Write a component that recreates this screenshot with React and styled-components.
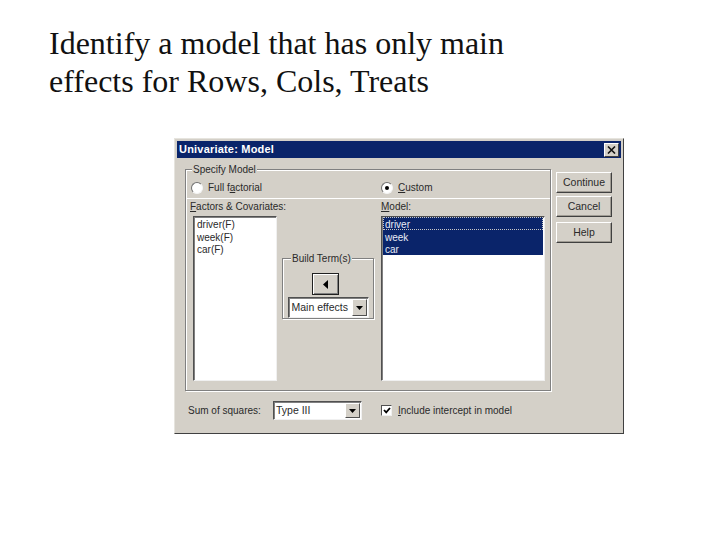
import React from "react";
import styled, { createGlobalStyle } from "styled-components";

const GlobalStyle = createGlobalStyle`
  html, body {
    margin: 0;
    background: #fff;
  }
  * {
    box-sizing: border-box;
  }
`;

const Slide = styled.div`
  width: 720px;
  height: 540px;
  padding: 24px 0 0 49px;
  overflow: hidden;
`;

const Heading = styled.h1`
  margin: 0;
  height: 114px;
  font: 400 32px/38px "Liberation Serif", serif;
  color: #111;
`;

const Dialog = styled.div`
  width: 450px;
  height: 296px;
  margin-left: 125px;
  padding: 2px 2px 0 2px;
  background: #d4d0c8;
  border: 1px solid;
  border-color: #e6e4de #404040 #404040 #e6e4de;
  font: 400 10px/13px "Liberation Sans", sans-serif;
  color: #2a2a2a;
`;

const TitleBar = styled.div`
  height: 17px;
  padding: 0 2px 0 2px;
  display: flex;
  align-items: center;
  justify-content: space-between;
  background: #0a246a;
  color: #fff;
  font-weight: 700;
  font-size: 11px;
  letter-spacing: 0.2px;
`;

const CloseButton = styled.div`
  width: 15px;
  height: 14px;
  display: flex;
  align-items: center;
  justify-content: center;
  background: #d4d0c8;
  border: 1px solid;
  border-color: #fff #404040 #404040 #fff;
`;

const Body = styled.div`
  display: flex;
  gap: 5px;
  padding: 11px 0 0 8px;
`;

const MainColumn = styled.div`
  width: 366px;
`;

const Group = styled.div`
  position: relative;
  border: 1px solid #808080;
  box-shadow: 1px 1px 0 #fff, inset 1px 1px 0 #fff;
`;

const ModelGroup = styled(Group)`
  height: 222px;
  display: flex;
  flex-direction: column;
`;

const Legend = styled.span`
  position: absolute;
  top: -7px;
  left: ${(p) => p.$left}px;
  padding: 0 1px;
  background: #d4d0c8;
  white-space: nowrap;
`;

const RadioRow = styled.div`
  height: 28px;
  padding: 7px 0 0 5px;
  display: flex;
  align-items: center;
`;

const Choice = styled.label`
  display: flex;
  align-items: center;
  gap: 5px;
  width: ${(p) => p.$width}px;
`;

const Radio = styled.span`
  width: 12px;
  height: 12px;
  display: flex;
  align-items: center;
  justify-content: center;
  border-radius: 50%;
  background: #fff;
  border: 1px solid;
  border-color: #707070 #f4f4f4 #f4f4f4 #707070;
  &::after {
    content: "";
    width: 4px;
    height: 4px;
    border-radius: 50%;
    background: ${(p) => (p.$checked ? "#000" : "transparent")};
  }
`;

const Panel = styled.div`
  flex: 1;
  display: flex;
  padding-left: 3px;
  border-top: 1px solid #fff;
  margin-left: 1px;
`;

const ListColumn = styled.div`
  width: ${(p) => p.$width}px;
  margin-right: ${(p) => p.$after}px;
  padding-top: 1px;
`;

const ListLabel = styled.div`
  height: 16px;
  white-space: nowrap;
`;

const ListBox = styled.div`
  height: 165px;
  margin-left: ${(p) => p.$inset}px;
  padding: 0 1px;
  background: #fff;
  border: 1px solid;
  border-color: #505050 #f0f0f0 #f0f0f0 #505050;
  box-shadow: inset 1px 1px 0 #808080;
`;

const ListItem = styled.div`
  height: 12.67px;
  line-height: 15px;
  padding-left: 2px;
  white-space: nowrap;
  background: ${(p) => (p.$selected ? "#0a246a" : "transparent")};
  color: ${(p) => (p.$selected ? "#e8ecf6" : "#2a2a2a")};
  outline: ${(p) => (p.$focused ? "1px dotted #c8c8c8" : "none")};
  outline-offset: -1px;
`;

const BuildGroup = styled(Group)`
  width: 92px;
  height: 61px;
  margin-top: 59px;
  margin-right: 7px;
  display: flex;
  flex-direction: column;
  align-items: center;
  gap: 2px;
  padding-top: 14px;
`;

const ArrowButton = styled.div`
  width: 27px;
  height: 22px;
  margin-right: 5px;
  display: flex;
  align-items: center;
  justify-content: center;
  background: #d4d0c8;
  border: 1px solid #202020;
  box-shadow: inset 1px 1px 0 #fff, inset -1px -1px 0 #808080;
`;

const Combo = styled.div`
  width: ${(p) => p.$width}px;
  height: ${(p) => p.$height}px;
  padding: 1px 1px 1px ${(p) => p.$indent}px;
  display: flex;
  align-items: center;
  justify-content: space-between;
  background: #fff;
  border: 1px solid;
  border-color: #505050 #f0f0f0 #f0f0f0 #505050;
  box-shadow: inset 1px 1px 0 #808080;
  font-size: 10.5px;
`;

const ComboArrow = styled.div`
  width: 15px;
  height: 100%;
  display: flex;
  align-items: center;
  justify-content: center;
  background: #d4d0c8;
  border: 1px solid;
  border-color: #fff #505050 #505050 #fff;
`;

const BottomRow = styled.div`
  display: flex;
  align-items: center;
  padding: 10px 0 0 3px;
`;

const ComboLabel = styled.span`
  width: 85px;
`;

const CheckRow = styled.label`
  display: flex;
  align-items: center;
  gap: 6px;
  margin-left: 19px;
`;

const CheckBox = styled.span`
  width: 11px;
  height: 11px;
  display: flex;
  align-items: center;
  justify-content: center;
  background: #fff;
  border: 1px solid;
  border-color: #505050 #f0f0f0 #f0f0f0 #505050;
`;

const ButtonColumn = styled.div`
  width: 56px;
  display: flex;
  flex-direction: column;
  padding-top: 3px;
`;

const Button = styled.div`
  height: 21px;
  margin-bottom: ${(p) => p.$after}px;
  display: flex;
  align-items: center;
  justify-content: center;
  background: #d4d0c8;
  border: 1px solid;
  border-color: #fff #404040 #404040 #fff;
  box-shadow: inset -1px -1px 0 #a09c94;
  font-size: 10.5px;
`;

const Key = styled.span`
  text-decoration: underline;
`;

function ArrowDown() {
  return (
    <svg width="7" height="4" viewBox="0 0 7 4">
      <path d="M0 0h7L3.5 4z" fill="#000" />
    </svg>
  );
}

export default function App() {
  return (
    <>
      <GlobalStyle />
      <Slide>
        <Heading>
          Identify a model that has only main
          <br />
          effects for Rows, Cols, Treats
        </Heading>
        <Dialog>
          <TitleBar>
            <span>Univariate: Model</span>
            <CloseButton>
              <svg width="9" height="8" viewBox="0 0 9 8">
                <path d="M1 0.5l7 7M8 0.5l-7 7" stroke="#111" strokeWidth="1.6" fill="none" />
              </svg>
            </CloseButton>
          </TitleBar>
          <Body>
            <MainColumn>
              <ModelGroup>
                <Legend $left={6}>Specify Model</Legend>
                <RadioRow>
                  <Choice $width={190}>
                    <Radio />
                    <span>
                      Full f<Key>a</Key>ctorial
                    </span>
                  </Choice>
                  <Choice $width={100}>
                    <Radio $checked />
                    <span>
                      <Key>C</Key>ustom
                    </span>
                  </Choice>
                </RadioRow>
                <Panel>
                  <ListColumn $width={87} $after={5}>
                    <ListLabel>
                      <Key>F</Key>actors &amp; Covariates:
                    </ListLabel>
                    <ListBox $inset={3}>
                      <ListItem>driver(F)</ListItem>
                      <ListItem>week(F)</ListItem>
                      <ListItem>car(F)</ListItem>
                    </ListBox>
                  </ListColumn>
                  <BuildGroup>
                    <Legend $left={8}>Build Term(s)</Legend>
                    <ArrowButton>
                      <svg width="5" height="9" viewBox="0 0 5 9">
                        <path d="M5 0v9L0 4.5z" fill="#000" />
                      </svg>
                    </ArrowButton>
                    <Combo $width={81} $height={21} $indent={3}>
                      Main effects
                      <ComboArrow>
                        <ArrowDown />
                      </ComboArrow>
                    </Combo>
                  </BuildGroup>
                  <ListColumn $width={164} $after={0}>
                    <ListLabel>
                      <Key>M</Key>odel:
                    </ListLabel>
                    <ListBox $inset={0}>
                      <ListItem $selected $focused>
                        driver
                      </ListItem>
                      <ListItem $selected>week</ListItem>
                      <ListItem $selected>car</ListItem>
                    </ListBox>
                  </ListColumn>
                </Panel>
              </ModelGroup>
              <BottomRow>
                <ComboLabel>Sum of squares:</ComboLabel>
                <Combo $width={89} $height={19} $indent={2}>
                  Type III
                  <ComboArrow>
                    <ArrowDown />
                  </ComboArrow>
                </Combo>
                <CheckRow>
                  <CheckBox>
                    <svg width="8" height="7" viewBox="0 0 8 7">
                      <path d="M1 3l2.2 2.4L7 1" stroke="#000" strokeWidth="1.8" fill="none" />
                    </svg>
                  </CheckBox>
                  <span>
                    <Key>I</Key>nclude intercept in model
                  </span>
                </CheckRow>
              </BottomRow>
            </MainColumn>
            <ButtonColumn>
              <Button $after={3}>Continue</Button>
              <Button $after={5}>Cancel</Button>
              <Button $after={0}>Help</Button>
            </ButtonColumn>
          </Body>
        </Dialog>
      </Slide>
    </>
  );
}
